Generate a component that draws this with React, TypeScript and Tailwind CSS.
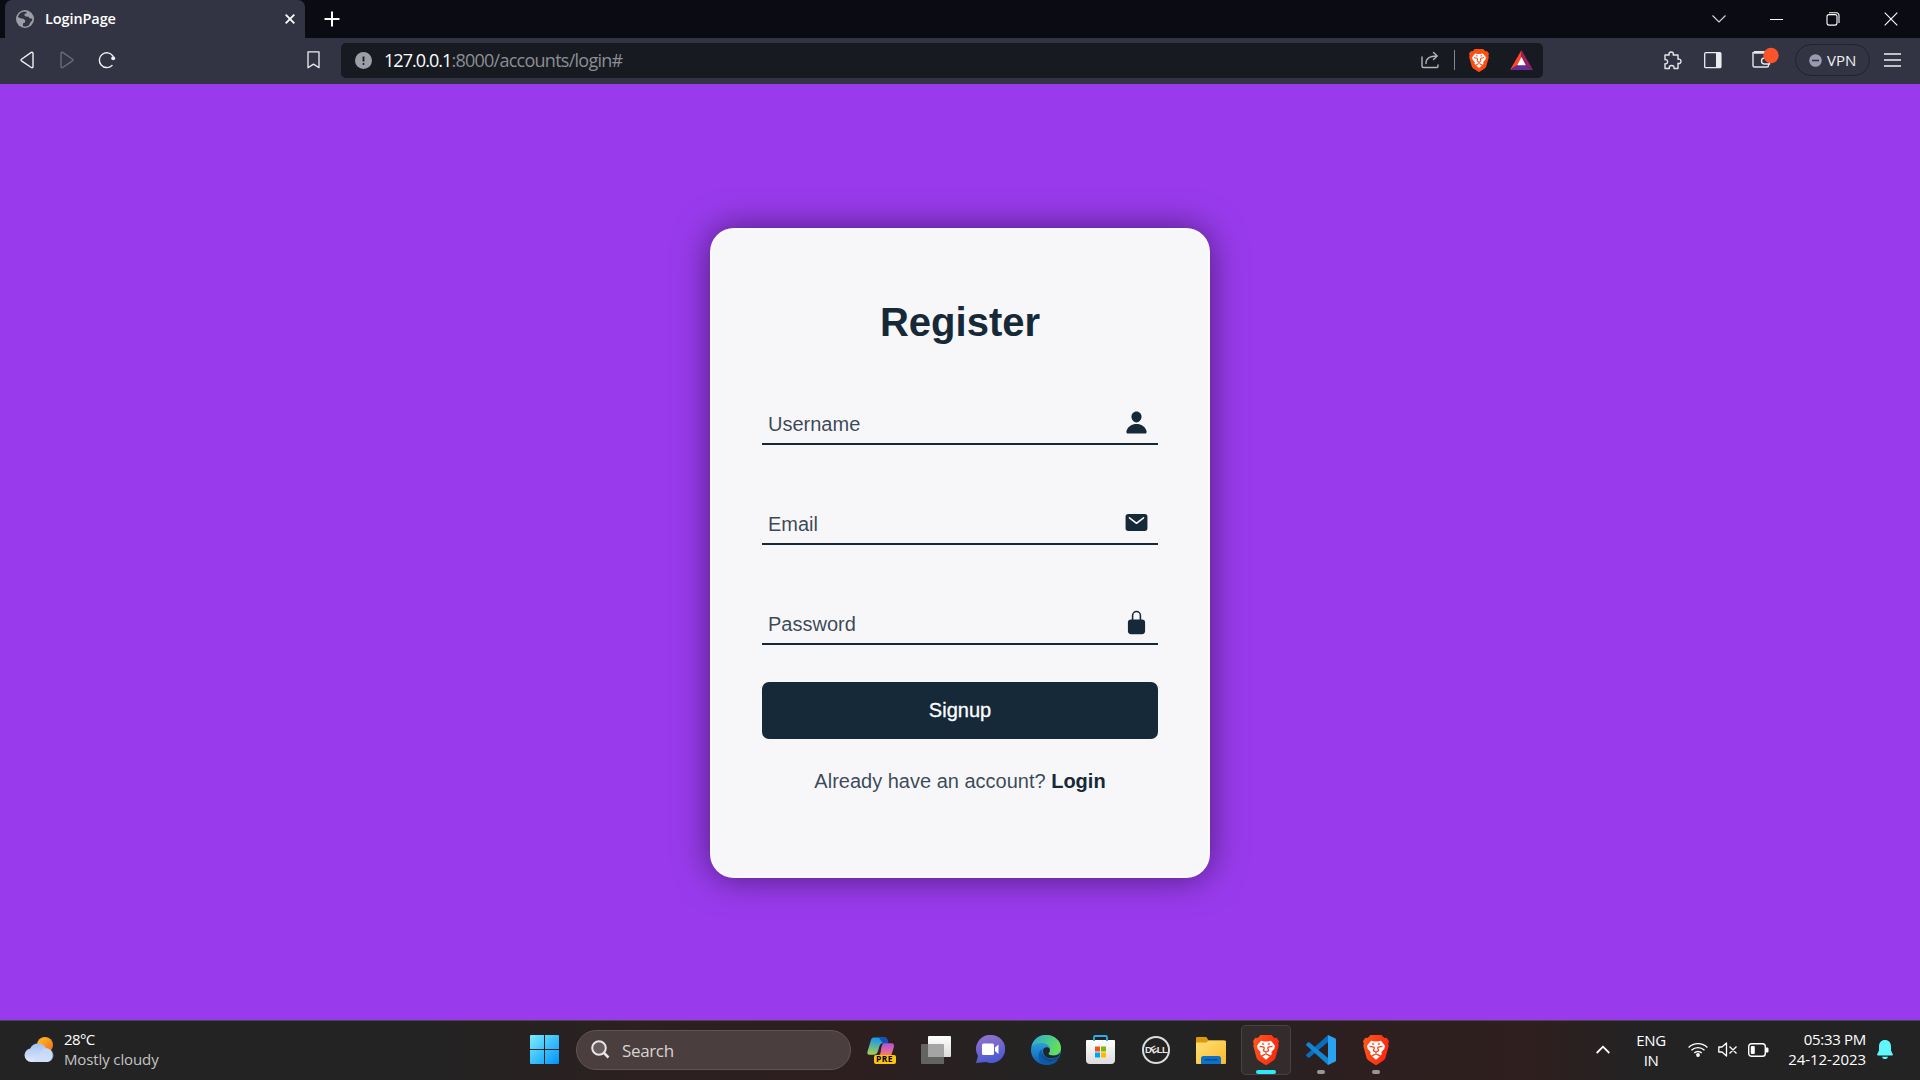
import type { ReactNode } from "react";
import { IoLockClosed, IoMail, IoPerson } from "react-icons/io5";

function BraveLogo({ width, height, fill }: { width: number; height: number; fill: string }) {
  return (
    <svg width={width} height={height} viewBox="0 0 26 30" preserveAspectRatio="none" className="shrink-0">
      <path d="M7.500 0h11l2.800 3 2.400-.2L26 6.200l-.8 2.600.5 2-3 11.200c-.5 1.700-1 2.600-2.300 3.500l-6 4c-.9.700-1.900.700-2.800 0l-6-4c-1.300-.9-1.800-1.800-2.300-3.500L.3 10.800l.5-2L0 6.200l2.300-3.400L4.700 3z" fill={fill} />
      <path d="M8.200 5.800l3 .7h3.600l3-.7c1.500 1.400 3 3.300 4.200 5.200l-.7 2.800-3 3.400.6 1.900-1.400 1.500-2.600-1.700h-3.800l-2.600 1.700-1.400-1.500.6-1.900-3-3.400L4 11c1.200-1.900 2.700-3.800 4.200-5.200z" fill="#fff" />
      <path d="M13 19.500l3.700 2-3.700 3.300-3.700-3.300z" fill="#fff" />
      <path d="M6.500 11.300l4.300.8.500.9-.9 2.600 2.600 1.600 2.600-1.600-.9-2.600.5-.9 4.300-.8M13 17v2M9 8.800l2.200.3M17 8.800l-2.200.3" fill="none" stroke="#f9441b" strokeWidth="1.300" />
    </svg>
  );
}

function TabStrip() {
  return (
    <div className="flex h-[38px] items-center bg-[#0b0b14] text-white">
      <div className="ml-[5px] flex h-full w-[300px] items-center rounded-t-[7px] bg-[#323443]">
        <svg width="18" height="18" viewBox="0 0 18 18" className="ml-[11px]">
          <circle cx="9" cy="9" r="9" fill="#9c9ea8" />
          <path d="M10 1.8C6 1 2.800 3.300 1.900 7l2.500 1.300 3 .4 2 1.900-.5 1.900-2 1 .1 2.700c2 .6 4.400.2 6-1l1.200-2.400 2-2.600-.1-1.700-2.100-.1-1.600-1.700-2.700-.1-1.600-1.500 1.200-1.500 1.700-.4z" fill="#323443" />
          <path d="M2 9c2 0 5 .2 5.500 1.800.3 1.200-1.400 1.500-1.500 2.500v1.800C3.500 14 2 12 2 9z" fill="#9c9ea8" />
        </svg>
        <span className="ml-[11px] w-[235px] text-[14.5px] font-semibold tracking-[-0.1px]">LoginPage</span>
        <svg width="10" height="10" viewBox="0 0 10 10" className="ml-[5px]" stroke="#fff" strokeWidth="1.800">
          <path d="M.7.7l8.600 8.600M9.300.7L.7 9.300" />
        </svg>
      </div>
      <svg width="16" height="16" viewBox="0 0 16 16" className="ml-[19px]" stroke="#fff" strokeWidth="2">
        <path d="M8 .5v15M.5 8h15" />
      </svg>
      <div className="mr-[22px] ml-auto flex items-center" >
        <svg width="14" height="8" viewBox="0 0 14 8" fill="none" stroke="#d8d8dc" strokeWidth="1.100">
          <path d="M.5.5L7 7 13.500.5" />
        </svg>
        <div className="ml-[44px] h-px w-[13px] bg-white" />
        <svg width="14" height="14" viewBox="0 0 14 14" className="ml-[43px]" fill="none" stroke="#fff" strokeWidth="1.100">
          <rect x="1" y="2.600" width="10" height="10.500" rx="2" />
          <path d="M3 .8h7.500a2.500 2.500 0 0 1 2.500 2.500V11" />
        </svg>
        <svg width="14" height="14" viewBox="0 0 14 14" className="ml-[44px]" stroke="#fff" strokeWidth="1.100">
          <path d="M.7.7l12.600 12.600M13.300.7L.7 13.300" />
        </svg>
      </div>
    </div>
  );
}

function Toolbar() {
  return (
    <div className="flex h-[46px] items-center bg-[#323443] pb-[2px]">
      <svg width="14" height="18" viewBox="0 0 14 18" className="ml-5" fill="none" stroke="#f0f0f3" strokeWidth="1.400" strokeLinejoin="round">
        <path d="M13 2.300v13.400c0 1-.9 1.400-1.700.8L1.500 9.800c-.6-.5-.6-1 0-1.500L11.300 1.400c.8-.5 1.700-.1 1.700.9z" />
      </svg>
      <svg width="14" height="18" viewBox="0 0 14 18" className="ml-[26px]" fill="none" stroke="#6a6c79" strokeWidth="1.400" strokeLinejoin="round">
        <path d="M1 2.300v13.400c0 1 .9 1.400 1.700.8l9.800-6.700c.6-.5.6-1 0-1.500L2.700 1.400C1.900.9 1 1.300 1 2.300z" />
      </svg>
      <svg width="18" height="18" viewBox="0 0 18 18" className="ml-[24px]" fill="none" stroke="#f0f0f3" strokeWidth="1.400" strokeLinecap="round">
        <path d="M14 14.400A7.400 7.400 0 1 1 15 5.200" />
        <circle cx="15.200" cy="7.300" r="2" fill="#f0f0f3" stroke="none" />
      </svg>
      <svg width="13" height="18" viewBox="0 0 13 18" className="ml-[191px]" fill="none" stroke="#f0f0f3" strokeWidth="1.300" strokeLinejoin="round">
        <path d="M1 .9h11v15.800l-5.500-3.600L1 16.700z" />
      </svg>
      <div className="ml-[21px] flex h-[35px] w-[1202px] items-center rounded-[5px] bg-[#171a21]">
        <svg width="17" height="17" viewBox="0 0 17 17" className="ml-[14px]">
          <circle cx="8.500" cy="8.500" r="8.500" fill="#9c9ea8" />
          <path d="M8.500 4.500v5" stroke="#171a21" strokeWidth="1.800" />
          <circle cx="8.500" cy="12" r="1" fill="#171a21" />
        </svg>
        <span className="ml-[12px] text-[18px] tracking-[-0.74px] text-[#8c8e93]">
          <span className="tracking-[-0.95px] text-white">127.0.0.1</span>:8000/accounts/login#
        </span>
        <div className="mr-[10px] ml-auto flex items-center">
          <svg width="18" height="18" viewBox="0 0 18 18" fill="none" stroke="#b4b6ba" strokeWidth="1.400" strokeLinejoin="round" strokeLinecap="round">
            <path d="M1 6v9c0 1 .6 1.500 1.500 1.500H16c.8 0 1-.5 1-1.500v-1M5 12.500C5 7.500 8 5 16 5M12.500 1.500L16.200 5l-3.700 3.500" />
          </svg>
          <div className="mr-[14px] ml-[15px] h-5 w-px bg-[#85878c]" />
          <BraveLogo width={20} height={23} fill="#fb4f12" />
          <svg width="23" height="20" viewBox="0 0 23 20" className="ml-[21px]">
            <path d="M11.500 0L0 20l7.500-5 4-7z" fill="#ff4724" />
            <path d="M11.500 0L23 20l-7.500-5-4-7z" fill="#9e1f63" />
            <path d="M0 20h23l-7.500-5h-8z" fill="#662d91" />
            <path d="M11.500 7l4.300 8.300H7.200z" fill="#fff" />
          </svg>
        </div>
      </div>
      <svg width="19" height="19" viewBox="0 0 19 19" className="ml-[120px]" fill="none" stroke="#e6e6ea" strokeWidth="1.400" strokeLinejoin="round">
        <path d="M2 4h4.200C5.500 2 6.600 1 8.200 1s2.700 1 2 3H15v4.300c2-.6 3 .5 3 2s-1 2.700-3 2V17.500h-4c.4-2-.5-3-2.300-3s-2.800 1-2.300 3H2v-4.700c2 .3 2.600-.8 2.600-2.200S3.800 8.300 2 8.700z" />
      </svg>
      <svg width="18" height="17" viewBox="0 0 18 17" className="ml-[22px]">
        <rect x=".7" y=".7" width="16.200" height="15" rx="1" fill="none" stroke="#ececf0" strokeWidth="1.300" />
        <path d="M12 1h5v14.700h-5z" fill="#ececf0" />
      </svg>
      <svg width="28" height="22" viewBox="0 0 28 22" className="mb-[4px] ml-[30px] shrink-0" fill="none" stroke="#e6e6ea" strokeWidth="1.400">
        <path d="M16 8V6H2.500A1.500 1.500 0 0 1 2.500 4.700H14M1 5v13.500c0 .9.600 1.500 1.500 1.500H15c.8 0 1.500-.6 1.500-1.500V17M17.500 11h-5a3 3 0 0 0 0 6h5z" />
        <circle cx="19" cy="8.500" r="7.700" fill="#fb542b" stroke="none" />
      </svg>
      <div className="ml-[15px] flex h-8 w-[75px] items-center rounded-full border border-[#20222e] pl-[13px] text-[#f0f0f3]">
        <svg width="13" height="13" viewBox="0 0 13 13">
          <circle cx="6.500" cy="6.500" r="6.300" fill="#9a9bb0" />
          <path d="M3 6.500h7" stroke="#323443" strokeWidth="1.600" />
        </svg>
        <span className="ml-[5px] text-[15px]">VPN</span>
      </div>
      <svg width="17" height="14" viewBox="0 0 17 14" className="ml-[14px]" stroke="#f0f0f3" strokeWidth="1.300">
        <path d="M0 1h17M0 7h17M0 13h17" />
      </svg>
    </div>
  );
}

function Field({ label, icon }: { label: string; icon: ReactNode }) {
  return (
    <div className="mb-[50px] flex h-[50px] items-center justify-between border-b-2 border-[#162938] pr-[9px] pl-[6px]">
      <span className="pt-[9px] text-[20px] leading-6 text-[#162938]/85">{label}</span>
      <div className="pt-[6px] text-[25px]">{icon}</div>
    </div>
  );
}

function RegisterCard() {
  return (
    <form className="flex h-[650px] w-[500px] flex-col rounded-[24px] border-2 border-white/50 bg-[#f7f7fa] px-[50px] text-[#162938] shadow-[0_0_35px_rgba(0,0,0,0.5)]" style={{ fontFamily: '"Liberation Sans", Arial, sans-serif' }}>
      <h1 className="mt-[67px] h-[98px] text-center text-[40px] leading-[50px] font-bold">Register</h1>
      <Field label="Username" icon={<IoPerson />} />
      <Field label="Email" icon={<IoMail />} />
      <Field label="Password" icon={<IoLockClosed />} />
      <button type="button" className="-mt-[13px] h-[57px] shrink-0 rounded-[7px] bg-[#162938] pb-[2px] text-[20px] text-white [-webkit-text-stroke:0.3px_white]">Signup</button>
      <p className="mt-[30px] text-center text-[20px] leading-6 text-[#162938]/85">
        Already have an account? <a className="font-bold text-[#162938]">Login</a>
      </p>
    </form>
  );
}

function Cell({ children, active = false, mark }: { children: ReactNode; active?: boolean; mark?: string }) {
  return (
    <div className={active ? "relative grid h-[50px] w-[50px] place-items-center rounded-[5px] border border-white/10 bg-white/5" : "relative grid h-[50px] w-[50px] place-items-center"}>
      {children}
      {mark && <div className={mark} />}
    </div>
  );
}

function CopilotIcon() {
  return (
    <div className="relative h-[28px] w-[29px]">
      <svg width="29" height="28" viewBox="0 0 30 28">
        <path d="M7 1h11c3 0 3 2 4 6h-6c-2 0-3 2-4 6s-2 6-5 6H3c-3 0-3-2-2-5L4 4c.5-2 1.500-3 3-3z" fill="url(#copilotA)" />
        <path d="M16 1h2.500c2 0 3 2 3.700 6H17c-2-1-3-4-5-6z" fill="#1451b8" />
        <path d="M18 7h7c3 0 3.500 2 2.500 5L25 20H12c3-2 2-6 3-9 .6-2 1-4 3-4z" fill="url(#copilotB)" />
      </svg>
      <span className="absolute right-0 bottom-0 flex h-[9px] w-[22px] items-center justify-center rounded-[2px] bg-[#fcc40c] text-[8.5px] leading-none font-bold tracking-[0.4px] text-black">PRE</span>
    </div>
  );
}

function Taskbar() {
  return (
    <div className="flex h-[60px] items-center border-t border-[#4a4848] bg-[linear-gradient(90deg,#232323_0%,#232323_22%,#2d2020_34%,#2d1f20_45%,#242323_54%,#242323_62%,#2d1f20_70%,#2f1f1f_80%,#232323_85%,#232323_100%)] pb-[2px] text-white">
      <svg width="31" height="26" viewBox="0 0 31 26" className="ml-[24px]">
        <circle cx="21" cy="8" r="8" fill="url(#sun)" />
        <path d="M7 25a6.800 6.800 0 0 1-.8-13.500A9 9 0 0 1 22 11a7.200 7.200 0 0 1 1.500 14z" fill="url(#cloud)" />
        <path d="M15 17c2-5 6-6.500 9-5.300A6.700 6.700 0 0 1 23 25H9z" fill="#c9dcf8" opacity=".6" />
      </svg>
      <div className="mb-[2px] ml-[9px] w-[110px] text-[15px] leading-5">
        <div className="tracking-[-0.6px]">28°C</div>
        <div className="tracking-[-0.12px] whitespace-nowrap text-[#c4c4c4]">Mostly cloudy</div>
      </div>
      <svg width="29" height="29" viewBox="0 0 29 29" className="ml-[356px]" fill="url(#win)">
        <path d="M0 1a1 1 0 0 1 1-1h13v14H0zM15 0h13a1 1 0 0 1 1 1v13H15zM0 15h14v14H1a1 1 0 0 1-1-1zM15 15h14v13a1 1 0 0 1-1 1H15z" />
      </svg>
      <div className="ml-[17px] flex h-10 w-[275px] items-center rounded-full border border-[#625455] bg-[#4a3e3f]">
        <svg width="19" height="19" viewBox="0 0 19 19" className="ml-[14px]" fill="none" stroke="#e6e6e6" strokeWidth="2">
          <circle cx="8" cy="8" r="6.800" fill="#675d5f" />
          <path d="M12.500 12.500l5 5" strokeWidth="2.500" />
        </svg>
        <span className="ml-[12px] pt-[2px] text-[17px] tracking-[-0.35px] text-[#d8d3d3]">Search</span>
      </div>
      <div className="ml-[5px] flex gap-[5px]">
        <Cell><CopilotIcon /></Cell>
        <Cell>
          <svg width="30" height="28" viewBox="0 0 30 28">
            <path d="M1 8h21a1 1 0 0 1 1 1v19H1a1 1 0 0 1-1-1V9a1 1 0 0 1 1-1z" fill="#636363" />
            <rect x="7" y="0" width="23" height="21" rx="1" fill="url(#pane)" />
            <path d="M7 8h15a1 1 0 0 1 1 1v12H8a1 1 0 0 1-1-1z" fill="#a4a4a4" />
          </svg>
        </Cell>
        <Cell>
          <svg width="29" height="29" viewBox="0 0 29 29" className="mr-px">
            <path d="M15 0a14 14 0 1 1-5 27L0 28l2-7A14 14 0 0 1 15 0z" fill="url(#chat)" />
            <rect x="6" y="8.500" width="12" height="11.500" rx="1.500" fill="#fff" />
            <path d="M19 12.500l3.500-3v9.500L19 16z" fill="#fff" />
          </svg>
        </Cell>
        <Cell>
          <svg width="30" height="30" viewBox="0 0 30 30">
            <circle cx="15" cy="15" r="15" fill="url(#edgeBlue)" />
            <path d="M.5 12C2 4 8 0 15 0c9 0 15 6 15 13 0 5-4 7.500-8 7.500-3.500 0-5-1-4.500-2.500 1-1 1.500-2 1.500-3.500C19 10 14 7.500 9 8 5 8.200 2 9.500.5 12z" fill="url(#edgeGreen)" />
            <path d="M11 14c-3 6 2 13 10 13 3 0 5-1 6.500-2C25 28 20 30 15 30 6 28 6 18 11 14z" fill="#0c59a4" />
            <path d="M13 12.500c-3 3-2 7 1 9.500 4 3 9 2 13.500-.5.500-.3 1 .2.600.8C24 28 17 27.500 14 25c-5-4-4-10-1-12.500z" fill="#114a8b" />
            <path d="M17.500 18.500c1-1 1.500-2.500 1.300-4.500-1-2-4-2.500-5.500-1-2 2-1.500 6 1.200 8.500 3 2.500 8 2 12.800 0 1-1 2-2.500 2.500-4-3 3-7 3.500-10 2.800-1.500-.3-2.600-1-2.300-1.800z" fill="#20252b" />
          </svg>
        </Cell>
        <Cell>
          <svg width="29" height="30" viewBox="0 0 29 30" className="mr-px">
            <path d="M1 5h27a1 1 0 0 1 1 1v19a4 4 0 0 1-4 4H4a4 4 0 0 1-4-4V6a1 1 0 0 1 1-1z" fill="url(#pane)" />
            <path d="M8 6V2.200C8 1.500 8.500 1 9.200 1h10.600c.7 0 1.200.5 1.200 1.200V6" fill="none" stroke="#2aaee8" strokeWidth="1.800" />
            <path d="M9 11.500h5v5H9z" fill="#f25022" />
            <path d="M15 11.500h5v5h-5z" fill="#7fba00" />
            <path d="M9 17.500h5v5H9z" fill="#00a4ef" />
            <path d="M15 17.500h5v5h-5z" fill="#ffb900" />
          </svg>
        </Cell>
        <Cell>
          <div className="flex h-[28px] w-[28px] items-center justify-center rounded-full border-2 border-[#dcdcdc] text-[9.5px] leading-none font-bold tracking-[-0.7px] text-[#e8e8e8]" style={{ fontFamily: '"Liberation Sans", sans-serif' }}>
            D<span className="-rotate-[30deg]">E</span>LL
          </div>
        </Cell>
        <Cell>
          <svg width="30" height="27" viewBox="0 0 30 27" className="mt-px">
            <path d="M0 1a1 1 0 0 1 1-1h9c1 0 2 3.500 3 3.500h15V10H0z" fill="#dc9a08" />
            <path d="M0 5.500h10c1 0 2-2 3-2h16a1 1 0 0 1 1 1V26a1 1 0 0 1-1 1H1a1 1 0 0 1-1-1z" fill="url(#folder)" />
            <path d="M5 27v-5.500a2.500 2.500 0 0 1 2.500-2.500h15a2.500 2.500 0 0 1 2.500 2.500V27z" fill="#0c71c8" />
            <path d="M8.500 22.800h13" stroke="#0a3f82" strokeWidth="1.200" />
          </svg>
        </Cell>
        <Cell active mark="absolute bottom-0 h-1 w-5 rounded-full bg-[#2ee9f8]">
          <BraveLogo width={26} height={30} fill="url(#brave)" />
        </Cell>
        <Cell mark="absolute bottom-[1px] h-1 w-2 rounded-full bg-[#9b9596]">
          <svg width="30" height="30" viewBox="0 0 30 30">
            <path d="M22 7L3.500 22.500c-.5.400-1 .4-1.500 0L.4 21c-.5-.5-.5-1 0-1.500L22 0z" fill="#0a6ebd" />
            <path d="M22 23L3.500 7.500c-.5-.4-1-.4-1.500 0L.4 9c-.5.500-.5 1 0 1.500L22 30z" fill="#1485d1" />
            <path d="M22 0l7 3.200c.6.300 1 .8 1 1.500v20.600c0 .7-.4 1.200-1 1.500L22 30z" fill="#29a3f1" />
          </svg>
        </Cell>
        <Cell mark="absolute bottom-[1px] h-1 w-2 rounded-full bg-[#9b9596]">
          <BraveLogo width={26} height={30} fill="url(#brave)" />
        </Cell>
      </div>
      <svg width="14" height="9" viewBox="0 0 14 9" className="ml-[195px]" fill="none" stroke="#fff" strokeWidth="1.800">
        <path d="M.7 8L7 1.700 13.300 8" />
      </svg>
      <div className="ml-[21px] w-10 text-center text-[15px] leading-5 tracking-[-0.4px]">
        <div>ENG</div>
        <div>IN</div>
      </div>
      <svg width="20" height="15" viewBox="0 0 20 15" className="ml-[17px]" fill="none" stroke="#fff" strokeWidth="1.400">
        <path d="M.6 5.500a13.300 13.300 0 0 1 18.800 0M3.500 8.300a9.200 9.200 0 0 1 13 0M6.300 11a5.200 5.200 0 0 1 7.400 0" />
        <circle cx="10" cy="13" r="1.900" fill="#fff" stroke="none" />
      </svg>
      <svg width="20" height="15" viewBox="0 0 20 15" className="ml-[10px]" fill="none" stroke="#fff" strokeWidth="1.300" strokeLinejoin="round">
        <path d="M.8 5v5h3.200l4.500 4V1L4 5zM11.500 4.500l7 7M18.500 4.500l-7 7" />
      </svg>
      <svg width="21" height="14" viewBox="0 0 21 14" className="ml-[10px]">
        <rect x=".7" y=".7" width="16.600" height="12.600" rx="2.800" fill="none" stroke="#fff" strokeWidth="1.400" />
        <rect x="2.800" y="3" width="4" height="8" rx="1" fill="#fff" />
        <path d="M18 4.500h1.200c.8 0 1.300.7 1.300 1.300v2.400c0 .7-.5 1.300-1.300 1.300H18z" fill="#fff" />
      </svg>
      <div className="mb-[2px] ml-auto w-[84px] text-right text-[15px] leading-5 whitespace-nowrap">
        <div className="tracking-[-0.3px]">05:33 PM</div>
        <div className="tracking-[-0.05px]">24-12-2023</div>
      </div>
      <svg width="16" height="19" viewBox="0 0 16 19" className="mr-[27px] ml-[11px]">
        <path d="M8 0c-3.600 0-6 2.700-6 6.200v4.300L.2 14.300c-.3.700 0 1.200.8 1.200h14c.8 0 1.100-.5.8-1.200L14 10.500V6.200C14 2.700 11.600 0 8 0z" fill="#5ff7fb" />
        <path d="M5 16.700h6c-.4 1.400-1.500 2.300-3 2.300s-2.600-.9-3-2.300z" fill="#5ff7fb" />
      </svg>
    </div>
  );
}

function Gradients() {
  const list: [string, string, string, number, number][] = [
    ["sun", "#ffc328", "#f26a12", 1, 1],
    ["cloud", "#a4c2f5", "#dfe9fb", 0, 1],
    ["win", "#7aeefc", "#0094fb", 1, 1],
    ["pane", "#ffffff", "#dcdcdc", 0, 1],
    ["chat", "#9a74c8", "#4d5bd0", 0.3, 1],
    ["edgeBlue", "#35b5e6", "#0c5cb5", 0, 1],
    ["edgeGreen", "#2aa6dc", "#62e05a", 1, 0.4],
    ["folder", "#ffe07a", "#fbb92a", 1, 1],
    ["brave", "#ff5a1c", "#fb2a10", 1, 0.3],
    ["copilotA", "#1a9ae8", "#b6d23c", -0.2, 1],
    ["copilotB", "#b052e0", "#fb7a70", 0, 1],
  ];
  return (
    <svg width="0" height="0" className="absolute">
      <defs>
        {list.map(([id, from, to, x, y]) => (
          <linearGradient key={id} id={id} x1="0" y1="0" x2={x} y2={y}>
            <stop offset="0" stopColor={from} />
            <stop offset="1" stopColor={to} />
          </linearGradient>
        ))}
      </defs>
    </svg>
  );
}

export default function App() {
  return (
    <div className="flex h-[1080px] w-[1920px] flex-col overflow-hidden" style={{ fontFamily: '"Open Sans", "Noto Sans", sans-serif' }}>
      <Gradients />
      <TabStrip />
      <Toolbar />
      <main className="flex flex-1 items-center justify-center bg-[#993bed]">
        <div className="pt-[2px]">
          <RegisterCard />
        </div>
      </main>
      <Taskbar />
    </div>
  );
}
